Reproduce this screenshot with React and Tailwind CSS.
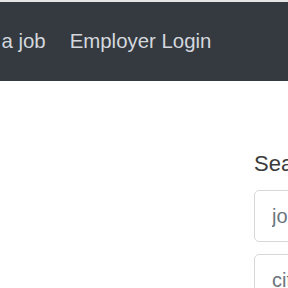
export default function App() {
  return (
    <div
      className="w-[288px] h-[288px] overflow-hidden bg-white"
      style={{ fontFamily: '"Liberation Sans", Arial, sans-serif' }}
    >
      {/* top edge */}
      <div className="h-[2px] bg-[#e4e4e4]" />

      {/* Navbar */}
      <nav className="h-[79px] bg-[#343a40] flex items-center">
        <div className="flex items-center gap-[24px] -ml-[45px] whitespace-nowrap text-[20.4px] leading-none text-[#d4d8de] pb-[1px]">
          <span>Post a job</span>
          <span>Employer Login</span>
        </div>
      </nav>

      {/* Content */}
      <div className="flex mt-[70px]">
        <div className="w-[254px] shrink-0" />
        <div className="w-[300px] shrink-0 flex flex-col">
          <h4 className="text-[22px] leading-[1.2] text-[#3b3b3b] mb-[13px] whitespace-nowrap">
            Search jobs
          </h4>
          <input
            className="h-[52px] w-full border border-[#d6d9dc] rounded-[5px] pl-[17px] text-[20px] text-[#495057] placeholder:text-[#6c757d] outline-none"
            placeholder="job title"
          />
          <input
            className="mt-[12px] h-[52px] w-full border border-[#d6d9dc] rounded-[5px] pl-[17px] text-[20px] text-[#495057] placeholder:text-[#6c757d] outline-none"
            placeholder="city"
          />
        </div>
      </div>
    </div>
  );
}
